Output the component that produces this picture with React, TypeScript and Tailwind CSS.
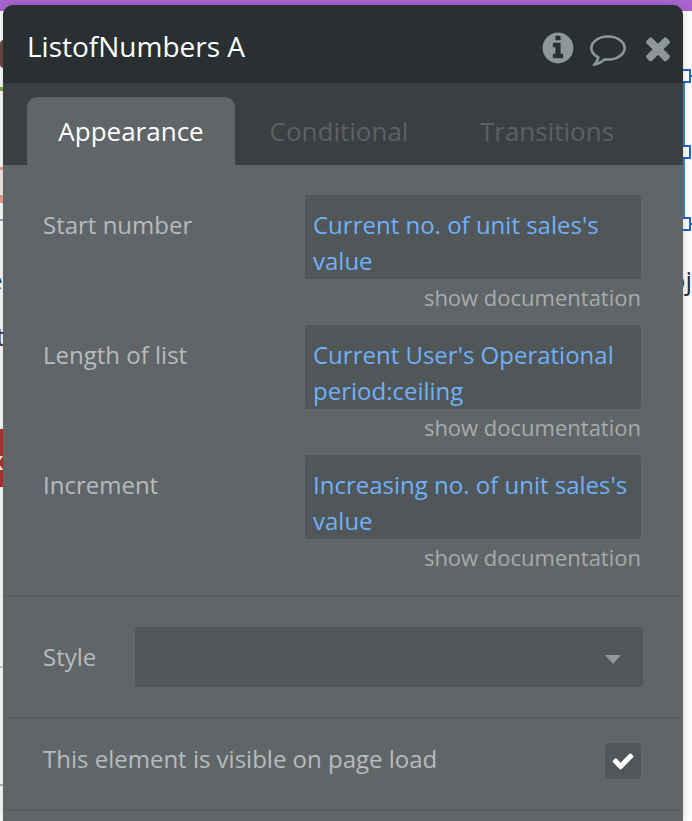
import React, { useState } from 'react';

interface Field {
    id: string;
    label: string;
    value: string;
}

const FIELDS: Field[] = [
    { id: 'start', label: 'Start number', value: "Current no. of unit sales's value" },
    { id: 'length', label: 'Length of list', value: "Current User's Operational period:ceiling" },
    { id: 'increment', label: 'Increment', value: "Increasing no. of unit sales's value" },
];

const TABS = ['Appearance', 'Conditional', 'Transitions'];

const ICONS = {
    info: 'M1152 1376v-160q0-14-9-23t-23-9h-96v-512q0-14-9-23t-23-9h-320q-14 0-23 9t-9 23v160q0 14 9 23t23 9h96v320h-96q-14 0-23 9t-9 23v160q0 14 9 23t23 9h448q14 0 23-9t9-23zm-128-896v-160q0-14-9-23t-23-9h-192q-14 0-23 9t-9 23v160q0 14 9 23t23 9h192q14 0 23-9t9-23zm640 416q0 209-103 385.5t-279.5 279.5-385.5 103-385.5-103-279.5-279.5-103-385.5 103-385.5 279.5-279.5 385.5-103 385.5 103 279.5 279.5 103 385.5z',
    comment: 'M896 384q-204 0-381.5 69.5t-282 187.5-104.5 255q0 112 71.5 213.5t201.5 175.5l87 50-27 96q-24 91-70 172 152-63 275-171l43-38 57 6q69 8 130 8 204 0 381.5-69.5t282-187.5 104.5-255-104.5-255-282-187.5-381.5-69.5zm896 512q0 174-120 321.5t-326 233-450 85.5q-70 0-145-8-198 175-460 242-49 14-114 22h-5q-15 0-27-10.5t-16-27.5v-1q-3-4-.5-12t2-10 4.5-9.5l6-9 7-8.5 8-9q7-8 31-34.5t34.5-38 31-39.5 32.5-51 27-59 26-76q-157-89-247.5-220t-90.5-281q0-130 71-248.5t191-204.5 286-136.5 348-50.5 348 50.5 286 136.5 191 204.5 71 248.5z',
    close: 'M1490 1322q0 40-28 68l-136 136q-28 28-68 28t-68-28l-294-294-294 294q-28 28-68 28t-68-28l-136-136q-28-28-28-68t28-68l294-294-294-294q-28-28-28-68t28-68l136-136q28-28 68-28t68 28l294 294 294-294q28-28 68-28t68 28l136 136q28 28 28 68t-28 68l-294 294 294 294q28 28 28 68z',
    check: 'M1671 566q0 40-28 68l-724 724-136 136q-28 28-68 28t-68-28l-136-136-362-362q-28-28-28-68t28-68l136-136q28-28 68-28t68 28l294 295 656-657q28-28 68-28t68 28l136 136q28 28 28 68z',
};

const Icon: React.FC<{ name: keyof typeof ICONS; className: string }> = ({ name, className }) => (
    <svg viewBox="0 0 1792 1792" fill="currentColor" className={className} aria-hidden="true">
        <path d={ICONS[name]} />
    </svg>
);

// Page being edited; only its edges show around the property panel
const Canvas: React.FC = () => (
    <div className="absolute inset-0 overflow-hidden bg-white" aria-hidden="true">
        <div className="h-[11px] bg-[#a864cd]" />
        <div className="absolute left-0 top-10 h-7 w-5 rounded-l-sm bg-[#6b4a45]" />
        <div className="absolute left-0 top-[87px] h-1 w-5 bg-[#84a848]" />
        <div className="absolute left-0 top-[167px] h-9 w-5 border-t-3 border-b-8 border-[#e6a699] bg-[#f4efed]" />
        <div className="absolute left-0 top-[219px] h-0.5 w-5 bg-[#a3a7a9]" />
        <span className="absolute -left-3 top-[262px] text-[26px] leading-9 text-[#1f3049]">e</span>
        <span className="absolute -left-1 top-[318px] text-[26px] leading-9 text-[#4a3430]">t</span>
        <div className="absolute left-0 top-[429px] h-[58px] w-5 bg-[#b93030]" />
        <span className="absolute -left-2.5 top-[442px] text-[26px] leading-9 text-white">x</span>
        <div className="absolute left-0 top-[666px] h-0.5 w-5 bg-[#cfcfcf]" />
        <div className="absolute left-0 top-[784px] h-0.5 w-5 bg-[#b4b4b4]" />

        <div className="absolute right-[7px] top-[76px] h-[148px] w-0.5 bg-[#4685c4]" />
        <div className="absolute right-0 top-[75px] h-0.5 w-2 bg-[#2463cc]" />
        <div className="absolute right-0 top-[223px] h-0.5 w-2 bg-[#2463cc]" />
        <div className="absolute right-px top-[69px] h-3.5 w-3.5 border-2 border-[#2463cc] bg-white" />
        <div className="absolute right-px top-[145px] h-3.5 w-3.5 border-2 border-[#2463cc] bg-white" />
        <div className="absolute right-px top-[217px] h-3.5 w-3.5 border-2 border-[#2463cc] bg-white" />
        <span className="absolute right-0 top-[262px] text-[26px] leading-9 text-[#2b2f36]">oj</span>
    </div>
);

const FieldRow: React.FC<{ field: Field }> = ({ field }) => (
    <div className="flex justify-between">
        <label htmlFor={field.id} className="pt-3 text-2xl leading-9 text-[#b7bbbd]">
            {field.label}
        </label>
        <div className="flex w-84 flex-col">
            <button
                id={field.id}
                className="rounded-xs bg-[#515659] px-2 pt-3 text-left text-2xl leading-9 text-[#6fb1f8]"
            >
                {field.value}
            </button>
            <a href="#documentation" className="pt-1 pb-3.5 text-right text-[22px] leading-7 text-[#a8abac]">
                show documentation
            </a>
        </div>
    </div>
);

const App: React.FC = () => {
    const [activeTab, setActiveTab] = useState('Appearance');
    const [visible, setVisible] = useState(true);

    return (
        <div className="relative flex min-h-screen flex-col pt-[5px] pr-[9px] pl-[3px] font-['Open_Sans',sans-serif]">
            <Canvas />
            <section className="relative flex flex-1 flex-col overflow-hidden rounded-t-[10px] bg-[#606568] shadow-[0_2px_10px_rgba(0,0,0,0.2)]">
                <header className="flex h-[78px] items-center justify-between bg-[#2a3031] pt-1 pr-[7px] pl-6">
                    <h1 className="text-[28px] leading-9 text-white">ListofNumbers A</h1>
                    <div className="flex gap-3.5 pt-1 text-[#8c979a]">
                        <button aria-label="Info"><Icon name="info" className="size-9" /></button>
                        <button aria-label="Comment"><Icon name="comment" className="size-9" /></button>
                        <button aria-label="Close"><Icon name="close" className="size-9" /></button>
                    </div>
                </header>

                <nav className="grid grid-cols-3 bg-[#3a3f41] pt-3.5 pr-8 pl-6">
                    {TABS.map(tab => (
                        <button
                            key={tab}
                            onClick={() => setActiveTab(tab)}
                            className={`h-[68px] rounded-t-[10px] text-[26px] leading-9 ${tab === activeTab ? 'bg-[#606568] text-white' : 'text-[#5c6164]'}`}
                        >
                            {tab}
                        </button>
                    ))}
                </nav>

                <div className="border-b-2 border-[#5a5f62] px-10 pt-[30px] pb-2.5">
                    <div className="pr-0.5">
                        {FIELDS.map(field => (
                            <FieldRow key={field.id} field={field} />
                        ))}
                    </div>
                </div>

                <div className="flex items-center border-b-2 border-[#5a5f62] px-10 py-[30px]">
                    <label htmlFor="style" className="w-[92px] text-2xl leading-9 text-[#b7bbbd]">Style</label>
                    <div className="relative flex-1">
                        <select id="style" className="block h-[60px] w-full appearance-none rounded-xs bg-[#515659] px-3 text-2xl text-[#b7bbbd]">
                            <option value=""></option>
                        </select>
                        <svg viewBox="0 0 16 9" className="pointer-events-none absolute top-7 right-[22px] h-[9px] w-4" fill="#93989b" aria-hidden="true">
                            <path d="M0 0h16L8 9z" />
                        </svg>
                    </div>
                </div>

                <div className="flex items-start justify-between border-b-2 border-[#5a5f62] pt-6 pr-[42px] pb-[30px] pl-10">
                    <label htmlFor="visible" className="text-2xl leading-8 text-[#b7bbbd]">
                        This element is visible on page load
                    </label>
                    <span className="grid place-items-center">
                        <input
                            id="visible"
                            type="checkbox"
                            checked={visible}
                            onChange={e => setVisible(e.target.checked)}
                            className="col-start-1 row-start-1 size-9 appearance-none rounded-xs bg-[#515659]"
                        />
                        {visible && <Icon name="check" className="pointer-events-none col-start-1 row-start-1 size-6 text-white" />}
                    </span>
                </div>
            </section>
        </div>
    );
};

export default App;
